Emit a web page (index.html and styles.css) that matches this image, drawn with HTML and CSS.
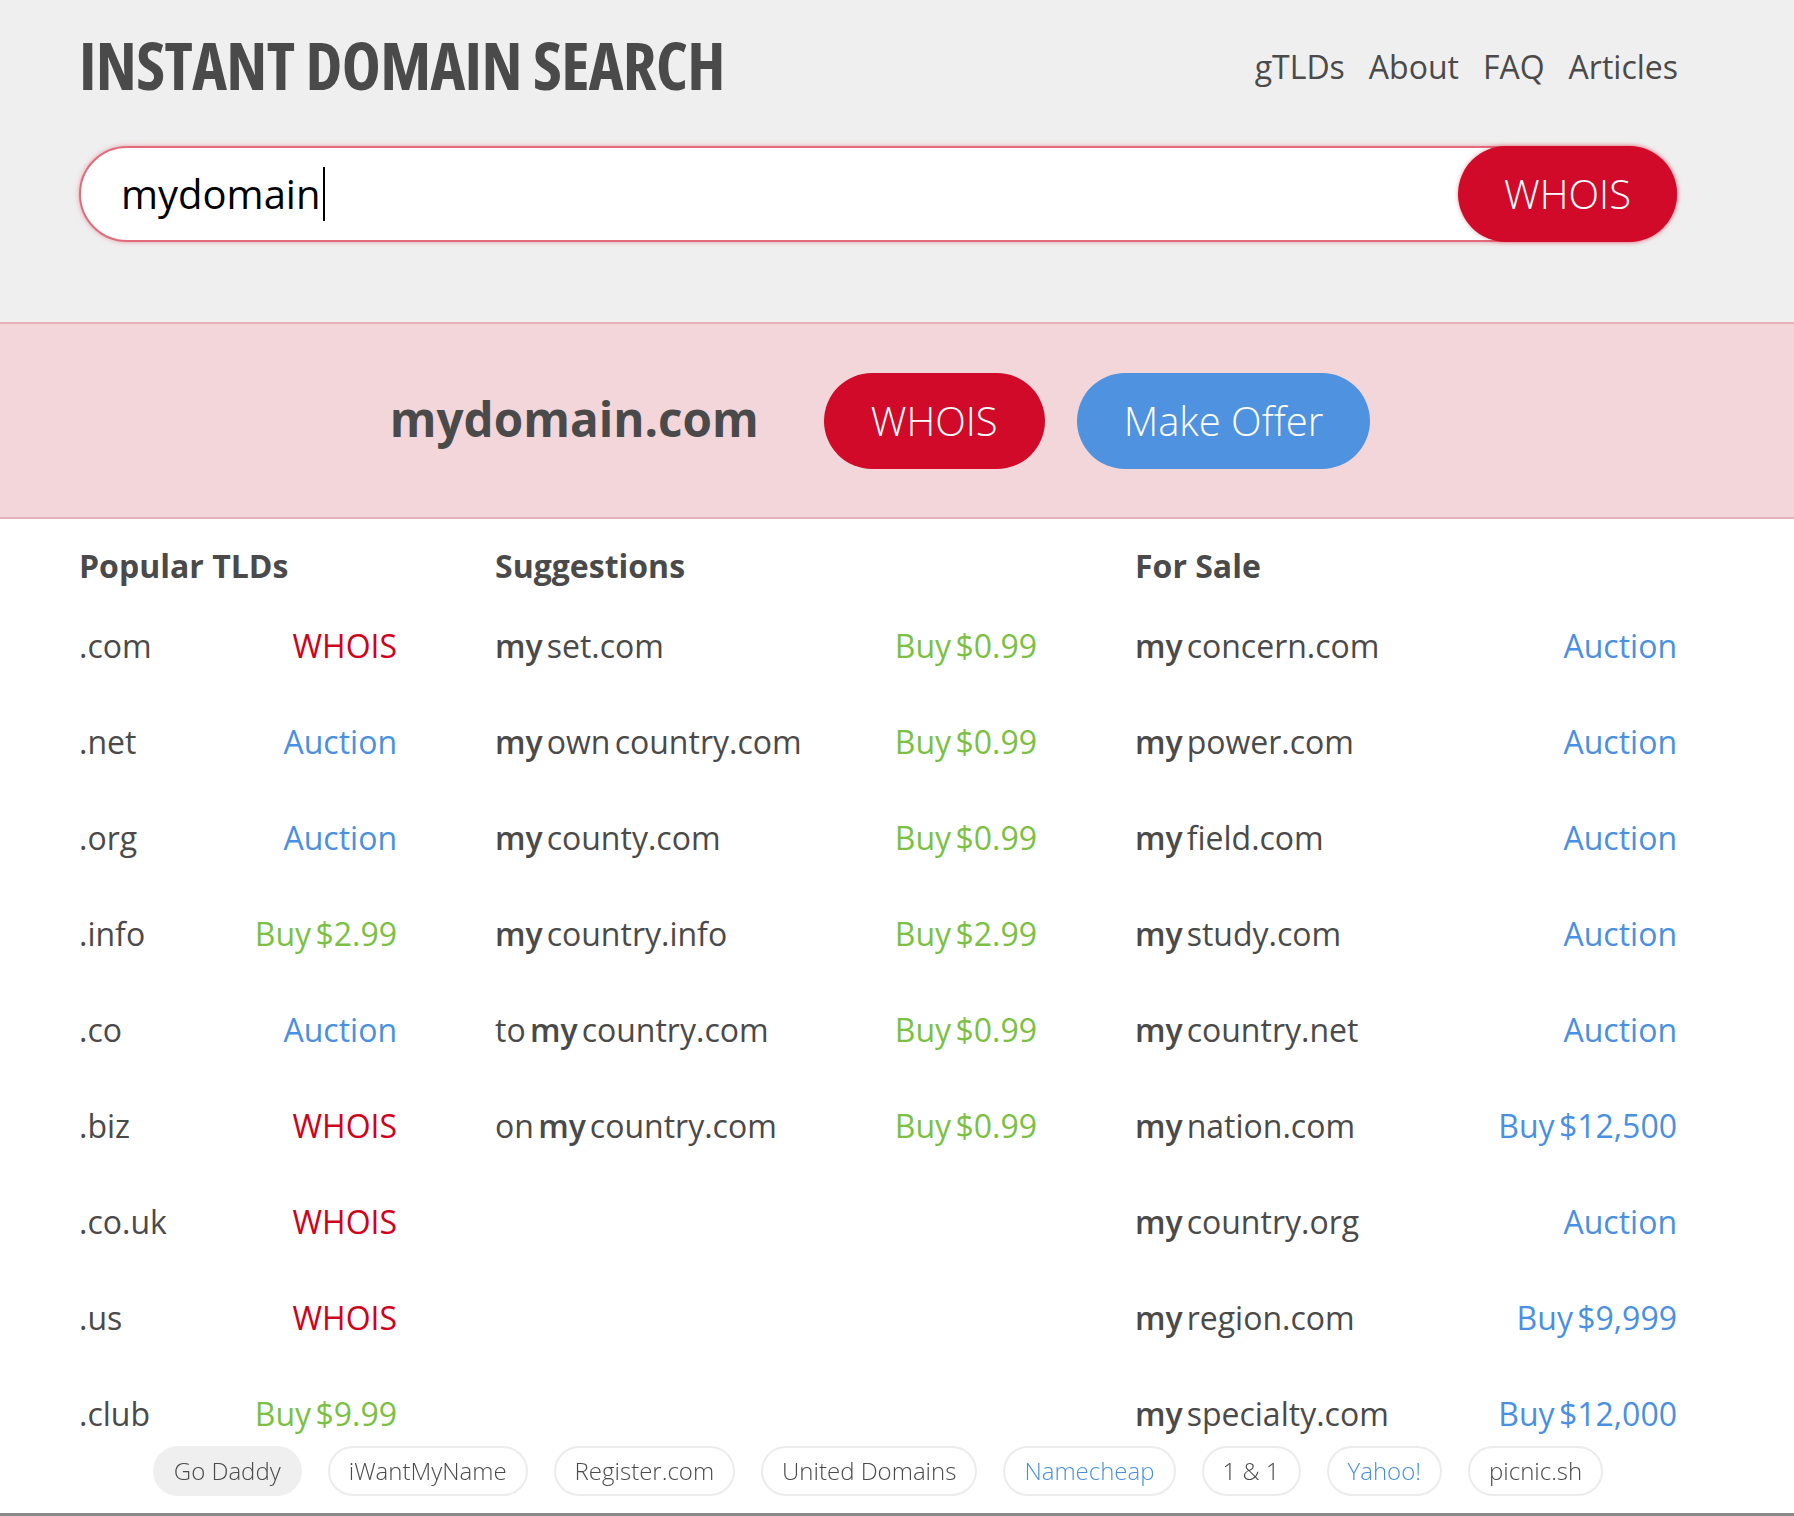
FILE: index.html
```html
<!DOCTYPE html>
<html lang="en">
<head>
<meta charset="utf-8">
<title>Instant Domain Search</title>
<link rel="stylesheet" href="styles.css">
</head>
<body>
<header class="top">
  <div class="topbar">
    <h1 class="logo">INSTANT DOMAIN SEARCH</h1>
    <nav class="nav">
      <a href="#">gTLDs</a>
      <a href="#">About</a>
      <a href="#">FAQ</a>
      <a href="#">Articles</a>
    </nav>
  </div>
  <div class="search">
    <div class="field"><span class="query">mydomain</span><span class="caret"></span></div>
    <button class="btn btn-red btn-search">WHOIS</button>
  </div>
</header>

<section class="exact">
  <div class="exact-inner">
    <span class="exact-name">mydomain.com</span>
    <button class="btn btn-red">WHOIS</button>
    <button class="btn btn-blue">Make Offer</button>
  </div>
</section>

<main class="results">
  <div class="col">
    <h2>Popular TLDs</h2>
    <div class="row"><span class="dom">.com</span><span class="v red">WHOIS</span></div>
    <div class="row"><span class="dom">.net</span><span class="v blue">Auction</span></div>
    <div class="row"><span class="dom">.org</span><span class="v blue">Auction</span></div>
    <div class="row"><span class="dom">.info</span><span class="v green">Buy $2.99</span></div>
    <div class="row"><span class="dom">.co</span><span class="v blue">Auction</span></div>
    <div class="row"><span class="dom">.biz</span><span class="v red">WHOIS</span></div>
    <div class="row"><span class="dom">.co.uk</span><span class="v red">WHOIS</span></div>
    <div class="row"><span class="dom">.us</span><span class="v red">WHOIS</span></div>
    <div class="row"><span class="dom">.club</span><span class="v green">Buy $9.99</span></div>
  </div>
  <div class="col">
    <h2>Suggestions</h2>
    <div class="row"><span class="dom"><b class="my">my</b>set.com</span><span class="v green">Buy $0.99</span></div>
    <div class="row"><span class="dom"><b class="my">my</b>own country.com</span><span class="v green">Buy $0.99</span></div>
    <div class="row"><span class="dom"><b class="my">my</b>county.com</span><span class="v green">Buy $0.99</span></div>
    <div class="row"><span class="dom"><b class="my">my</b>country.info</span><span class="v green">Buy $2.99</span></div>
    <div class="row"><span class="dom">to <b class="my">my</b>country.com</span><span class="v green">Buy $0.99</span></div>
    <div class="row"><span class="dom">on <b class="my">my</b>country.com</span><span class="v green">Buy $0.99</span></div>
  </div>
  <div class="col">
    <h2>For Sale</h2>
    <div class="row"><span class="dom"><b class="my">my</b>concern.com</span><span class="v blue">Auction</span></div>
    <div class="row"><span class="dom"><b class="my">my</b>power.com</span><span class="v blue">Auction</span></div>
    <div class="row"><span class="dom"><b class="my">my</b>field.com</span><span class="v blue">Auction</span></div>
    <div class="row"><span class="dom"><b class="my">my</b>study.com</span><span class="v blue">Auction</span></div>
    <div class="row"><span class="dom"><b class="my">my</b>country.net</span><span class="v blue">Auction</span></div>
    <div class="row"><span class="dom"><b class="my">my</b>nation.com</span><span class="v blue">Buy $12,500</span></div>
    <div class="row"><span class="dom"><b class="my">my</b>country.org</span><span class="v blue">Auction</span></div>
    <div class="row"><span class="dom"><b class="my">my</b>region.com</span><span class="v blue">Buy $9,999</span></div>
    <div class="row"><span class="dom"><b class="my">my</b>specialty.com</span><span class="v blue">Buy $12,000</span></div>
  </div>
</main>

<footer class="registrars">
  <div class="chips">
    <a class="chip active" href="#">Go Daddy</a>
    <a class="chip" href="#">iWantMyName</a>
    <a class="chip" href="#">Register.com</a>
    <a class="chip" href="#">United Domains</a>
    <a class="chip link" href="#">Namecheap</a>
    <a class="chip" href="#">1 &amp; 1</a>
    <a class="chip link" href="#">Yahoo!</a>
    <a class="chip" href="#">picnic.sh</a>
  </div>
</footer>
</body>
</html>
```

FILE: styles.css
```css
* { box-sizing: border-box; }

html, body {
  margin: 0;
  padding: 0;
  background: #ffffff;
  font-family: "Open Sans", "Noto Sans", "Liberation Sans", sans-serif;
  color: #4a4a4a;
}

a { color: inherit; text-decoration: none; }

/* ---------- header ---------- */
.top {
  background: #efefef;
  border-bottom: 2px solid #e4b3ba;
  padding: 31px 117px 80px 79px;
}

.topbar {
  display: flex;
  justify-content: space-between;
  align-items: flex-start;
}

.logo {
  margin: 0;
  font-size: 66px;
  line-height: 66px;
  font-weight: 700;
  font-stretch: 75%;
  letter-spacing: -0.65px;
  color: #4a4a4a;
}

.nav {
  display: flex;
  gap: 24px;
  margin-top: 16px;
  margin-right: -1px;
  font-size: 32px;
  line-height: 40px;
  color: #4a4a4a;
}

.search {
  display: flex;
  align-items: stretch;
  height: 96px;
  margin-top: 49px;
  background: #ffffff;
  border: 2px solid #e26b7b;
  border-radius: 48px;
  box-shadow: 0 0 5px rgba(226, 90, 110, 0.55);
}

.field {
  flex: 1;
  display: flex;
  align-items: center;
  padding-left: 40px;
  font-size: 40px;
  color: #000;
}

.query { line-height: 50px; }

.caret {
  display: inline-block;
  width: 2px;
  height: 54px;
  background: #000;
  margin-left: 2px;
}

/* ---------- buttons ---------- */
.btn {
  font-family: "Open Sans", "Noto Sans", sans-serif;
  font-size: 40px;
  font-weight: 300;
  color: #ffffff;
  height: 96px;
  padding: 0 47px;
  border: none;
  border-radius: 48px;
  cursor: pointer;
  line-height: 96px;
}

.btn-red { background: #d00a28; }
.btn-blue { background: #4f92df; }

.btn-search {
  margin: -2px -2px -2px 0;
  height: 96px;
  width: 219px;
  padding: 0;
  box-shadow: 0 0 4px rgba(208, 10, 40, 0.4);
}

/* ---------- exact match band ---------- */
.exact {
  background: #f2d6da;
  border-bottom: 2px solid #e4b3ba;
  padding: 49px 117px 48px 79px;
}

.exact-inner {
  display: flex;
  justify-content: center;
  align-items: center;
  gap: 32px;
  padding-left: 4px;
}

.exact-name {
  font-size: 47.6px;
  font-weight: 700;
  color: #4a4a4a;
  margin-right: 33px;
  position: relative;
  top: -3px;
}

/* ---------- results ---------- */
.results {
  display: grid;
  grid-template-columns: 318px 542px 542px;
  column-gap: 98px;
  padding: 27px 0 0 79px;
}

.col h2 {
  margin: 0 0 12px 0;
  font-size: 32px;
  line-height: 40px;
  font-weight: 700;
  color: #4a4a4a;
}

.row {
  display: flex;
  justify-content: space-between;
  height: 96px;
  line-height: 96px;
  font-size: 32px;
  white-space: nowrap;
  word-spacing: -4px;
}

.dom { color: #4a4a4a; }

.my {
  font-weight: 600;
  margin-right: 4px;
  color: #4a4a4a;
}

.v.red { color: #d0021b; }
.v.blue { color: #4a90e2; }
.v.green { color: #7ac143; }

/* ---------- registrar footer ---------- */
.registrars {
  position: fixed;
  left: 0;
  right: 0;
  bottom: 0;
  padding: 0 117px 17px 79px;
  border-bottom: 3px solid #8a8a8a;
}

.chips {
  display: flex;
  justify-content: center;
  gap: 26px;
}

.chip {
  display: inline-flex;
  align-items: center;
  height: 50px;
  padding: 0 19px 1px;
  border: 2px solid #ececec;
  border-radius: 25px;
  background: #ffffff;
  font-size: 24px;
  font-weight: 300;
  color: #4a4a4a;
}

.chip.active {
  background: #efefef;
  border-color: #efefef;
}

.chip.link { color: #4a90e2; }
```
